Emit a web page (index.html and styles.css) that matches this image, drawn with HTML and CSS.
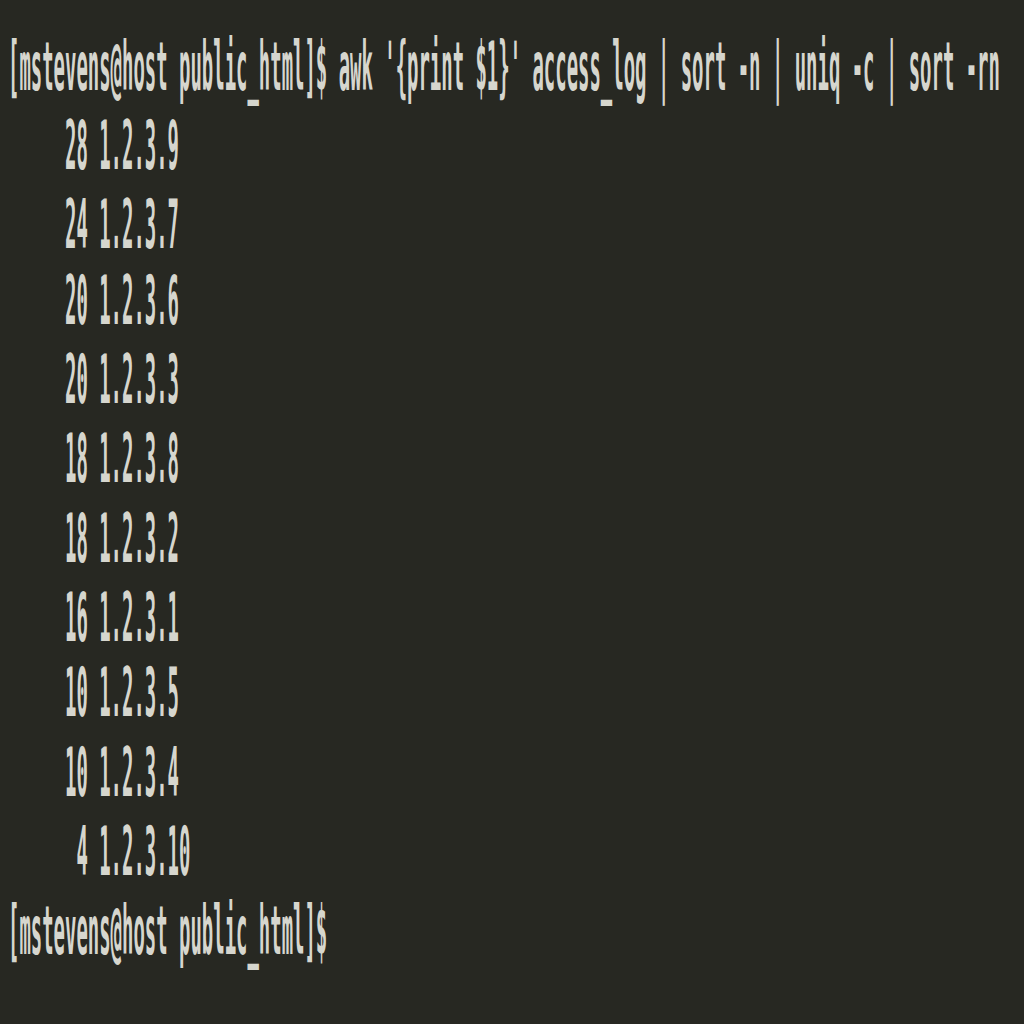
FILE: index.html
```html
<!DOCTYPE html>
<html>
<head>
<meta charset="utf-8">
<link rel="stylesheet" href="styles.css">
</head>
<body>
<div class="terminal">
<pre class="output">[mstevens@host public_html]$ awk '{print $1}' access_log | sort -n | uniq -c | sort -rn
     28 1.2.3.9
     24 1.2.3.7
     20 1.2.3.6
     20 1.2.3.3
     18 1.2.3.8
     18 1.2.3.2
     16 1.2.3.1
     10 1.2.3.5
     10 1.2.3.4
      4 1.2.3.10
[mstevens@host public_html]$</pre>
</div>
</body>
</html>
```
FILE: styles.css
```css
html, body {
  margin: 0;
  padding: 0;
  background: #272822;
  width: 1024px;
  height: 1024px;
  overflow: hidden;
}
.terminal {
  transform: scaleY(3.6);
  transform-origin: 0 0;
  padding: 8px 0 0 8px;
}
.output {
  margin: 0;
  font-family: "DejaVu Sans Mono", monospace;
  font-size: 18.95px;
  font-weight: bold;
  line-height: 21.8px;
  color: #d6d6ce;
  white-space: pre;
}
```
